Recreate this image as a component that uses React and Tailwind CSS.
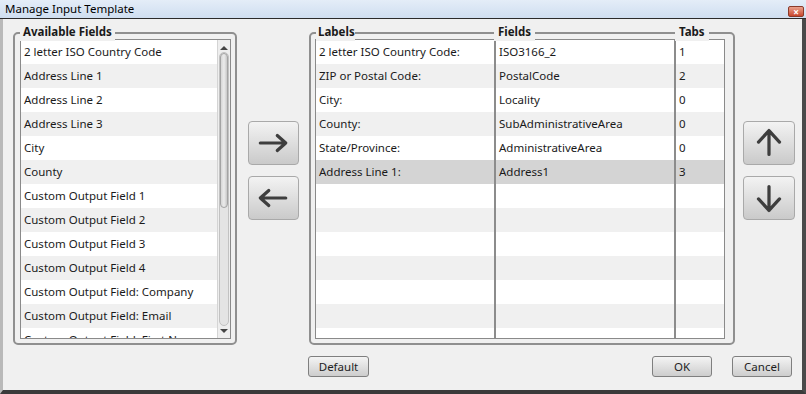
import React from 'react';

const available = [
  '2 letter ISO Country Code',
  'Address Line 1',
  'Address Line 2',
  'Address Line 3',
  'City',
  'County',
  'Custom Output Field 1',
  'Custom Output Field 2',
  'Custom Output Field 3',
  'Custom Output Field 4',
  'Custom Output Field: Company',
  'Custom Output Field: Email',
  'Custom Output Field: First Name',
];

const mapped = [
  ['2 letter ISO Country Code:', 'ISO3166_2', '1'],
  ['ZIP or Postal Code:', 'PostalCode', '2'],
  ['City:', 'Locality', '0'],
  ['County:', 'SubAdministrativeArea', '0'],
  ['State/Province:', 'AdministrativeArea', '0'],
  ['Address Line 1:', 'Address1', '3'],
];

function ArrowButton({ dir }) {
  const paths = {
    right: 'M12 22 H39 M30 14 L39 22 L30 30',
    left: 'M39 22 H12 M21 14 L12 22 L21 30',
    up: 'M26 34 V9 M15 21 L26 9 L37 21',
    down: 'M26 10 V35 M15 23 L26 35 L37 23',
  };
  return (
    <div className="w-full h-[44px] rounded-[4px] border border-[#a9a9a9] bg-gradient-to-b from-[#f3f3f3] to-[#cacaca]">
      <svg width="100%" height="100%" viewBox="0 0 52 44">
        <path d={paths[dir]} fill="none" stroke="#3e3e3e" strokeWidth="3.4" strokeLinecap="round" strokeLinejoin="round" />
      </svg>
    </div>
  );
}

function PlainButton({ label, w }) {
  return (
    <div className={`${w} h-[21px] rounded-[3px] border border-[#7f7f7f] bg-gradient-to-b from-[#f4f4f4] to-[#cdcdcd] flex items-center justify-center text-[#1e1e1e]`}>
      {label}
    </div>
  );
}

function Scrollbar() {
  return (
    <div className="w-[13px] h-full bg-[#eeeeee] border-l border-[#d4d4d4] flex flex-col items-center">
      <div className="h-[12px] flex items-end pb-[2px]">
        <div className="w-0 h-0 border-l-[4px] border-r-[4px] border-b-[4px] border-l-transparent border-r-transparent border-b-[#444]" />
      </div>
      <div className="flex-1 w-[10px] rounded-full border border-[#c2c2c2] bg-[#e4e4e4] flex flex-col">
        <div className="h-[155px] rounded-full border border-[#a4a4a4] bg-gradient-to-r from-[#d6d6d6] via-[#ececec] to-[#c8c8c8]" />
      </div>
      <div className="h-[12px] flex items-start pt-[3px]">
        <div className="w-0 h-0 border-l-[4px] border-r-[4px] border-t-[4px] border-l-transparent border-r-transparent border-t-[#444]" />
      </div>
    </div>
  );
}

export default function App() {
  const rows = Array.from({ length: 13 }, (_, i) => mapped[i] || ['', '', '']);
  return (
    <div className="w-[806px] h-[394px] flex flex-col bg-[#f0f0f0] font-['Noto_Sans',sans-serif] text-[11.5px] text-[#1a1a1a] overflow-hidden">
      <div className="h-[19px] shrink-0 relative flex items-center pl-[5px] bg-gradient-to-b from-[#e4edf8] to-[#cfdef0] border-b border-[#2b2b2b] text-black">
        Manage Input Template
        <div className="absolute right-[2px] top-[6px] w-[16px] h-[11px] rounded-[2px] border border-[#8a3a2a] bg-gradient-to-b from-[#e9a08c] to-[#c8452c] flex items-center justify-center text-white text-[10px] leading-none font-bold">
          ×
        </div>
      </div>
      <div className="flex-1 flex flex-col border-l-[3px] border-l-[#b9b9b9] border-r-[4px] border-r-[#4a4a4a] border-b-[4px] border-b-[#3a3a3a] pl-[10px] pt-[13px]">
        <div className="flex items-start">
          {/* available fields */}
          <div className="relative w-[224px] h-[313px] border-2 border-[#8f8f8f] rounded-[5px] pl-[5px] pt-[5px]">
            <span className="absolute -top-[11px] left-[5px] px-[3px] bg-[#f0f0f0] font-bold leading-[18px]">Available Fields</span>
            <div className="w-[211px] h-[300px] border border-[#8a8a8a] bg-white flex overflow-hidden">
              <div className="flex-1 flex flex-col">
                {available.map((name, i) => (
                  <div key={name} className={`h-[24px] shrink-0 flex items-center pl-[3px] ${i % 2 ? 'bg-[#f0f0f0]' : 'bg-white'}`}>
                    {name}
                  </div>
                ))}
              </div>
              <Scrollbar />
            </div>
          </div>

          <div className="ml-[11px] w-[51px] pt-[89px] flex flex-col gap-[11px]">
            <ArrowButton dir="right" />
            <ArrowButton dir="left" />
          </div>

          {/* mapped fields */}
          <div className="relative ml-[10px] w-[426px] h-[313px] border-2 border-[#8f8f8f] rounded-[5px] pl-[4px] pt-[5px]">
            <span className="absolute -top-[11px] left-[5px] pl-[2px] bg-[#f0f0f0] font-bold leading-[18px]">Labels</span>
            <span className="absolute -top-[11px] left-[183px] px-[4px] bg-[#f0f0f0] font-bold leading-[18px]">Fields</span>
            <span className="absolute -top-[11px] left-[364px] px-[4px] bg-[#f0f0f0] font-bold leading-[18px]">Tabs</span>
            <div className="w-[410px] h-[300px] border border-[#8a8a8a] bg-white flex flex-col overflow-hidden">
              {rows.map(([label, field, tab], i) => (
                <div
                  key={i}
                  className={`h-[24px] shrink-0 flex ${i === 5 ? 'bg-[#d4d4d4]' : i % 2 ? 'bg-[#f0f0f0]' : 'bg-white'}`}
                >
                  <div className="w-[180px] border-r-2 border-[#8c8c8c] flex items-center pl-[3px]">{label}</div>
                  <div className="w-[180px] border-r-2 border-[#8c8c8c] flex items-center pl-[3px]">{field}</div>
                  <div className="flex-1 flex items-center pl-[3px]">{tab}</div>
                </div>
              ))}
            </div>
          </div>

          <div className="ml-[8px] w-[52px] pt-[89px] flex flex-col gap-[11px]">
            <ArrowButton dir="up" />
            <ArrowButton dir="down" />
          </div>
        </div>

        <div className="mt-[11px] w-[779px] flex pl-[295px]">
          <PlainButton label="Default" w="w-[61px]" />
          <div className="flex-1" />
          <PlainButton label="OK" w="w-[60px]" />
          <div className="w-[20px]" />
          <PlainButton label="Cancel" w="w-[60px]" />
        </div>
      </div>
    </div>
  );
}
